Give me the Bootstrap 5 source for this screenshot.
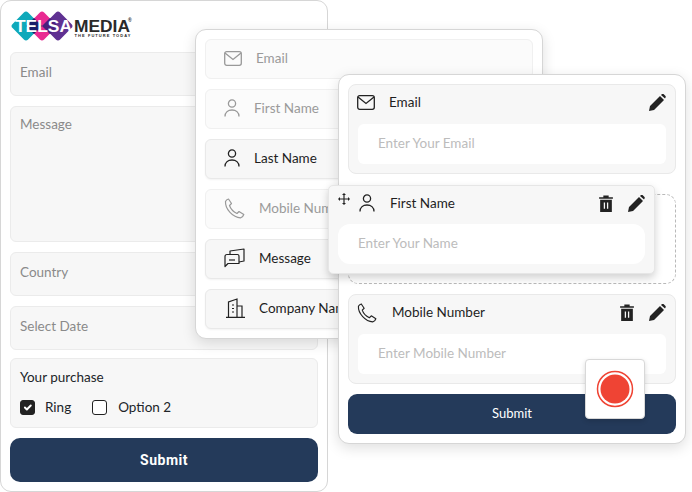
<!DOCTYPE html>
<html lang="en">
<head>
    <meta charset="UTF-8">
    <meta name="viewport" content="width=device-width, initial-scale=1.0">
    <title>Form builder</title>
    <link href="https://cdn.jsdelivr.net/npm/bootstrap@5.3.3/dist/css/bootstrap.min.css" rel="stylesheet">
    <style>
        body {
            width: 692px;
            height: 492px;
            overflow: hidden;
            background: #fff;
            font-family: "Lato", "Liberation Sans", sans-serif;
            font-size: 13.5px;
            color: #1e1e1e;
        }

        .stage { position: relative; width: 692px; height: 492px; }

        .panel {
            position: absolute;
            background: #fff;
            border: 1px solid #d6d6d6;
            border-radius: 11px;
            padding: 9px;
        }
        .panel-left { left: 0; top: 0; width: 328px; height: 492px; box-shadow: none; }
        .panel-mid { left: 195px; top: 29px; width: 348px; height: 310px; box-shadow: 0 4px 14px rgba(0,0,0,.13); }
        .panel-right { left: 338px; top: 74px; width: 348px; height: 370px; box-shadow: 0 4px 14px rgba(0,0,0,.13); }

        .brand { display: block; height: 32px; margin: 0 0 10px 0; }
        .brand-mid { fill: #2a2a2a; font-family: "Liberation Sans", sans-serif; font-weight: 700; }
        .brand-white { fill: #fff; font-family: "Liberation Sans", sans-serif; font-weight: 700; }

        .field-box {
            background: #f7f7f7;
            border: 1px solid #ebebeb;
            border-radius: 6px;
            padding: 0 9px;
            color: #8a8a8a;
            height: 44px;
            margin-bottom: 10px;
            line-height: 39px;
        }
        .field-tall { height: 136px; line-height: 35px; }
        .purchase-box {
            background: #f7f7f7;
            border: 1px solid #ebebeb;
            border-radius: 6px;
            padding: 8px 9px 0;
            height: 70px;
            margin: -2px 0 10px;
        }
        .purchase-title { margin-bottom: 10px; }
        .check-dark.form-check-input {
            width: 15px;
            height: 15px;
            margin: 0;
            border: 1px solid #222;
            border-radius: 3px;
            background-color: #fff;
            flex: none;
        }
        .check-dark.form-check-input:checked { background-color: #222; border-color: #222; }
        .check-text { margin-left: 10px; }
        .check-next.form-check-input { margin-left: 21px; }
        .check-text-2 { margin-left: 11px; }

        .btn-navy {
            background: #243a5a;
            color: #fff;
            border: 0;
            border-radius: 10px;
            height: 44px;
            width: 100%;
            font-family: "Roboto", sans-serif;
            font-weight: 700;
            font-size: 14px;
            letter-spacing: .5px;
        }
        .btn-navy:hover { background: #243a5a; color: #fff; }
        .btn-thin {
            height: 40px;
            font-family: "Lato", sans-serif;
            font-weight: 400;
            font-size: 13px;
            letter-spacing: 0;
            border-radius: 9px;
        }

        .pick-row {
            height: 40px;
            background: #f7f7f7;
            border: 1px solid #e9e9e9;
            border-radius: 6px;
            padding: 0 0 2px 18px;
            margin-bottom: 10px;
            box-shadow: 0 1px 2px rgba(0,0,0,.05);
            white-space: nowrap;
        }
        .pick-row:last-child { margin-bottom: 0; }
        .pick-faded { background: #fbfbfb; color: #9a9a9a; box-shadow: none; border-color: #f0f0f0; }
        .pick-row svg { flex: none; }
        .pick-gap-a { gap: 14px; }
        .pick-gap-b { gap: 14px; }
        .pick-building { margin-left: 2px; }

        .group-box {
            height: 90px;
            background: #f7f7f7;
            border: 1px solid #e9e9e9;
            border-radius: 8px;
            padding: 0 9px;
            margin-bottom: 10px;
        }
        .group-head { height: 39px; padding-bottom: 4px; margin-left: -1px; }
        .group-input {
            height: 40px;
            line-height: 38px;
            background: #fff;
            border-radius: 6px;
            padding-left: 20px;
            color: #bcbcbc;
        }
        .group-label { margin-left: 15px; }
        .group-label-mail { margin-left: 14px; }
        .trash-icon { margin-right: 15px; }
        .drop-slot {
            height: 90px;
            border: 1px dashed #b9b9b9;
            border-radius: 10px;
            margin: 20px 0 10px;
        }
        .drag-card {
            position: absolute;
            left: -11px;
            top: 110px;
            width: 327px;
            height: 89px;
            background: #f7f7f7;
            border: 1px solid #e6e6e6;
            border-radius: 5px;
            padding: 0 9px;
            box-shadow: 0 4px 9px rgba(0,0,0,.18);
        }
        .drag-card .group-head { height: 38px; margin-left: 0; }
        .drag-card .group-input { border-radius: 12px; }
        .drag-person { margin-left: 9px; }
        .record-box {
            position: absolute;
            left: 246px;
            top: 284px;
            width: 60px;
            height: 60px;
            background: #fff;
            border: 1px solid #d8d8d8;
            border-radius: 4px;
            box-shadow: 0 2px 5px rgba(0,0,0,.15);
        }
    </style>
</head>
<body>
    <div class="stage">

        <div class="panel panel-left">
            <svg class="brand" width="130" height="32" viewBox="10 10 130 32">
                <g>
                    <rect x="15" y="15" width="22" height="22" rx="3" fill="#0fa9ba" transform="rotate(45 26 26)"/>
                    <rect x="31" y="15" width="22" height="22" rx="3" fill="#e92a92" transform="rotate(45 42 26)"/>
                    <rect x="47" y="15" width="22" height="22" rx="3" fill="#5f3192" transform="rotate(45 58 26)"/>
                    <path d="M34 18l8 8-8 8-8-8z" fill="#1b1f6b"/>
                    <path d="M50 18l8 8-8 8-8-8z" fill="#4a1f7c"/>
                </g>
                <text class="brand-white" x="15" y="32" font-size="16.5" textLength="57" lengthAdjust="spacingAndGlyphs">TELSA</text>
                <text class="brand-mid" x="74" y="31.5" font-size="16.5" textLength="56" lengthAdjust="spacingAndGlyphs">MEDIA</text>
                <text class="brand-mid" x="74.5" y="37" font-size="4" textLength="56">THE FUTURE TODAY</text>
                <text class="brand-mid" x="128" y="22" font-size="5">®</text>
            </svg>
            <div class="field-box">Email</div>
            <div class="field-box field-tall">Message</div>
            <div class="field-box">Country</div>
            <div class="field-box">Select Date</div>
            <div class="purchase-box">
                <div class="purchase-title text-dark">Your purchase</div>
                <div class="d-flex align-items-center text-dark">
                    <input class="form-check-input check-dark" type="checkbox" checked>
                    <span class="check-text">Ring</span>
                    <input class="form-check-input check-dark check-next" type="checkbox">
                    <span class="check-text-2">Option 2</span>
                </div>
            </div>
            <button class="btn btn-navy" type="button">Submit</button>
        </div>

        <div class="panel panel-mid">
            <div class="pick-row pick-faded d-flex align-items-center pick-gap-a">
                <svg width="18" height="15" viewBox="0 0 18 15" fill="none" stroke="#999" stroke-width="1.3"><rect x=".7" y=".7" width="16.6" height="13.6" rx="2"/><path d="M1 2l8 6.5L17 2"/></svg>
                <span>Email</span>
            </div>
            <div class="pick-row pick-faded d-flex align-items-center pick-gap-b">
                <svg width="16" height="18" viewBox="0 0 16 18" fill="none" stroke="#999" stroke-width="1.3"><circle cx="8" cy="4.5" r="3.6"/><path d="M1 17.5c0-4 3-6.5 7-6.5s7 2.5 7 6.5"/></svg>
                <span>First Name</span>
            </div>
            <div class="pick-row d-flex align-items-center pick-gap-b">
                <svg width="16" height="18" viewBox="0 0 16 18" fill="none" stroke="#222" stroke-width="1.3"><circle cx="8" cy="4.5" r="3.6"/><path d="M1 17.5c0-4 3-6.5 7-6.5s7 2.5 7 6.5"/></svg>
                <span>Last Name</span>
            </div>
            <div class="pick-row pick-faded d-flex align-items-center pick-gap-b">
                <svg width="21" height="21" viewBox="0 0 21 21" fill="none" stroke="#999" stroke-width="1.2" stroke-linejoin="round"><path d="M1.5 3.500C2 2.500 3 1.500 4.500 1L7.500 5.500 5.500 7.500C6.500 10.500 10 14 13 15.500L15 13.500 19.800 16.500C19.300 18 18 19.500 16.500 19.800 9 19.500 1 11 1.500 3.500z"/></svg>
                <span>Mobile Number</span>
            </div>
            <div class="pick-row d-flex align-items-center pick-gap-b">
                <svg width="21" height="20" viewBox="0 0 21 20" fill="none" stroke="#222" stroke-width="1.2" stroke-linejoin="round"><path d="M6 6V3l14-2v12l-5 1"/><path d="M1 8.500c0-1 .7-2 2-2h10.500c1 0 1.500 1 1.500 2v7H4l-3 3z" fill="#f7f7f7"/><path d="M5 12h6"/></svg>
                <span>Message</span>
            </div>
            <div class="pick-row d-flex align-items-center pick-gap-b">
                <svg class="pick-building" width="19" height="20" viewBox="0 0 19 20" fill="none" stroke="#222" stroke-width="1.2"><path d="M0 19.300h19M2.500 19V4L11 1v18M11 8h5v11M6 7h2M6 10.500h2M6 14h2"/></svg>
                <span>Company Name</span>
            </div>
        </div>

        <div class="panel panel-right">
            <div class="group-box mb-0">
                <div class="group-head d-flex align-items-center">
                    <svg width="18" height="15" viewBox="0 0 18 15" fill="none" stroke="#222" stroke-width="1.3"><rect x=".7" y=".7" width="16.6" height="13.6" rx="2"/><path d="M1 2l8 6.5L17 2"/></svg>
                    <span class="flex-grow-1 group-label-mail">Email</span>
                    <svg width="17" height="17" viewBox="0 0 17 17" fill="#222"><path d="M0 17l1-5L11 2l4 4L5 16zM12 1l1-1c.5-.3 1-.3 1.500 0l2 2c.4.500.4 1 0 1.500L16 4.500z"/></svg>
                </div>
                <div class="group-input">Enter Your Email</div>
            </div>

            <div class="drop-slot"></div>

            <div class="group-box">
                <div class="group-head d-flex align-items-center">
                    <svg width="20" height="20" viewBox="0 0 21 21" fill="none" stroke="#222" stroke-width="1.2" stroke-linejoin="round"><path d="M1.500 3.500C2 2.500 3 1.500 4.500 1L7.500 5.500 5.500 7.500C6.500 10.500 10 14 13 15.500L15 13.500 19.800 16.500C19.300 18 18 19.500 16.500 19.800 9 19.500 1 11 1.500 3.500z"/></svg>
                    <span class="flex-grow-1 group-label">Mobile Number</span>
                    <svg class="trash-icon" width="14" height="17" viewBox="0 0 13 16" fill="#222"><path d="M0 2h4V.5h5V2h4v1.500H0zM1 4.500h11V16H1z"/><path d="M5 7v6M8 7v6" stroke="#f7f7f7" stroke-width="1.2"/></svg>
                    <svg width="17" height="17" viewBox="0 0 17 17" fill="#222"><path d="M0 17l1-5L11 2l4 4L5 16zM12 1l1-1c.5-.3 1-.3 1.500 0l2 2c.4.500.4 1 0 1.500L16 4.500z"/></svg>
                </div>
                <div class="group-input">Enter Mobile Number</div>
            </div>

            <button class="btn btn-navy btn-thin" type="button">Submit</button>

            <div class="drag-card">
                <div class="group-head d-flex align-items-center">
                    <svg class="mb-2" width="12" height="12" viewBox="0 0 12 12" fill="#222"><path d="M6 0l2 2H6.600v3.400H10V4l2 2-2 2V6.600H6.600V10H8l-2 2-2-2h1.400V6.600H2V8L0 6l2-2v1.400h3.400V2H4z"/></svg>
                    <svg class="drag-person" width="16" height="18" viewBox="0 0 16 18" fill="none" stroke="#222" stroke-width="1.3"><circle cx="8" cy="4.5" r="3.6"/><path d="M1 17.5c0-4 3-6.5 7-6.5s7 2.5 7 6.5"/></svg>
                    <span class="flex-grow-1 group-label">First Name</span>
                    <svg class="trash-icon" width="14" height="17" viewBox="0 0 13 16" fill="#222"><path d="M0 2h4V.5h5V2h4v1.500H0zM1 4.500h11V16H1z"/><path d="M5 7v6M8 7v6" stroke="#f7f7f7" stroke-width="1.2"/></svg>
                    <svg width="17" height="17" viewBox="0 0 17 17" fill="#222"><path d="M0 17l1-5L11 2l4 4L5 16zM12 1l1-1c.5-.3 1-.3 1.500 0l2 2c.4.500.4 1 0 1.500L16 4.500z"/></svg>
                </div>
                <div class="group-input">Enter Your Name</div>
            </div>

            <div class="record-box d-flex align-items-center justify-content-center">
                <svg width="38" height="38" viewBox="0 0 38 38"><circle cx="19" cy="19" r="17.5" fill="#fff" stroke="#ef4434" stroke-width="1.5"/><circle cx="19" cy="19" r="14.5" fill="#ef4434"/></svg>
            </div>
        </div>

    </div>
    <script src="https://cdn.jsdelivr.net/npm/bootstrap@5.3.3/dist/js/bootstrap.bundle.min.js"></script>
</body>
</html>
